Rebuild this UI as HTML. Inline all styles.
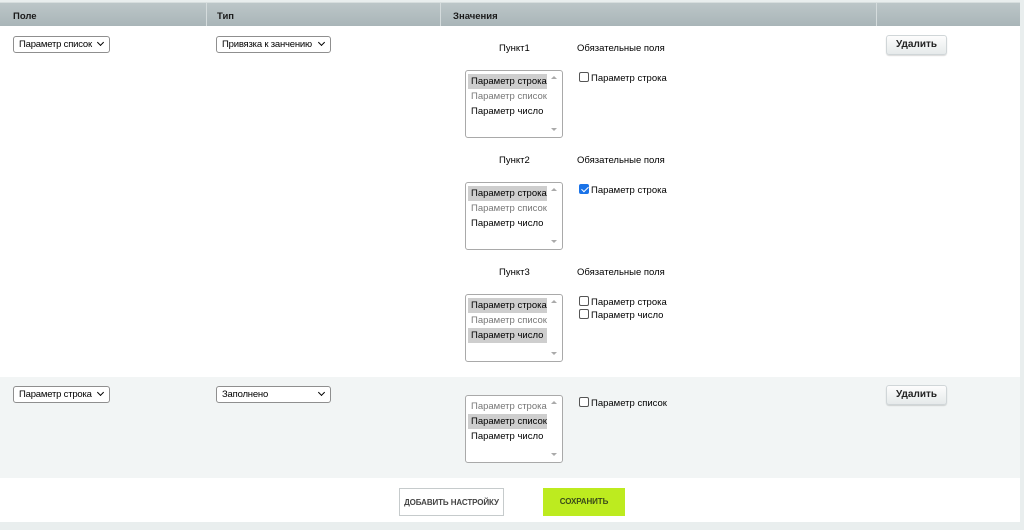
<!DOCTYPE html>
<html><head><meta charset="utf-8"><style>
*{box-sizing:border-box;margin:0;padding:0}
html,body{width:1024px;height:530px;overflow:hidden}
body{background:#e9eeee;font-family:"Liberation Sans",Arial,sans-serif;font-size:10px;color:#000;position:relative}
.a{position:absolute}
.hdr{left:0;top:2px;width:1020px;height:24px;background:linear-gradient(#bcc6c8,#a9b5b8);border-top:1px solid #d7dede}
.hdr span{position:absolute;top:8px;font-weight:bold;font-size:9.5px;color:#1a1a1a}
.vl{position:absolute;top:0;width:1px;height:24px;background:#d5dcdd}
.sel{position:absolute;height:17px;border:1px solid #8f8f8f;border-radius:3px;background:#fff;font-size:9.5px;padding:2px 0 0 5px;white-space:nowrap;overflow:hidden;letter-spacing:-0.2px}
.sel:after{content:"";position:absolute;right:6px;top:3px;width:4px;height:4px;border-right:1.6px solid #000;border-bottom:1.6px solid #000;transform:rotate(45deg)}
.lb{position:absolute;width:98px;height:68px;border:1px solid #a9a9a9;border-radius:3px;background:#fff;padding:3px 0 0 2px}
.lb div{height:15px;line-height:15px;padding-left:3px;width:79px;font-size:9.5px;white-space:nowrap;overflow:hidden}
.lb .s{background:#cecece}
.lb .g{color:#777}
.lb:before{content:"";position:absolute;right:5px;top:5px;border:3px solid transparent;border-bottom-color:#aaa;border-top:0}
.lb:after{content:"";position:absolute;right:5px;bottom:6px;border:3px solid transparent;border-top-color:#aaa;border-bottom:0}
.t{position:absolute;font-size:9.5px;white-space:nowrap}
.cb{position:absolute;width:10px;height:10px;border:1px solid #555;border-radius:2px;background:#fff}
.cb.on{background:#1a73e8;border-color:#1a73e8}
.cb.on:after{content:"";position:absolute;left:2.5px;top:0px;width:3px;height:6px;border-right:1.5px solid #fff;border-bottom:1.5px solid #fff;transform:rotate(45deg)}
.del{position:absolute;width:61px;height:20px;border:1px solid #d0d6d8;border-radius:3px;background:linear-gradient(#fdfdfd,#e6eaeb);font-weight:bold;font-size:10px;text-align:center;line-height:18px;color:#222;box-shadow:0 1px 1px rgba(0,0,0,.15)}
.btn{position:absolute;height:28px;font-weight:bold;font-size:8px;text-align:center;line-height:27px;white-space:nowrap;letter-spacing:-0.1px}
</style></head><body>
<div class="a hdr">
<span style="left:13px">Поле</span><span style="left:217px">Тип</span><span style="left:453px">Значения</span>
<div class="vl" style="left:206px"></div><div class="vl" style="left:440px"></div><div class="vl" style="left:876px"></div>
</div>
<div class="a" style="left:0;top:26px;width:1020px;height:351px;background:#fff"></div>
<div class="a" style="left:0;top:377px;width:1020px;height:101px;background:#f2f5f5"></div>
<div class="a" style="left:0;top:478px;width:1020px;height:44px;background:#fff"></div>

<div class="sel" style="left:13px;top:36px;width:97px">Параметр список</div>
<div class="sel" style="left:216px;top:36px;width:115px">Привязка к занчению</div>
<div class="del" style="left:886px;top:35px">Удалить</div>

<div class="t" style="left:499px;top:43px">Пункт1</div><div class="t" style="left:577px;top:43px">Обязательные поля</div>
<div class="lb" style="left:465px;top:70px"><div class="s">Параметр строка</div><div class="g">Параметр список</div><div>Параметр число</div></div>
<div class="cb" style="left:579px;top:72px"></div><div class="t" style="left:591px;top:73px">Параметр строка</div>

<div class="t" style="left:499px;top:155px">Пункт2</div><div class="t" style="left:577px;top:155px">Обязательные поля</div>
<div class="lb" style="left:465px;top:182px"><div class="s">Параметр строка</div><div class="g">Параметр список</div><div>Параметр число</div></div>
<div class="cb on" style="left:579px;top:184px"></div><div class="t" style="left:591px;top:185px">Параметр строка</div>

<div class="t" style="left:499px;top:267px">Пункт3</div><div class="t" style="left:577px;top:267px">Обязательные поля</div>
<div class="lb" style="left:465px;top:294px"><div class="s">Параметр строка</div><div class="g">Параметр список</div><div class="s">Параметр число</div></div>
<div class="cb" style="left:579px;top:296px"></div><div class="t" style="left:591px;top:297px">Параметр строка</div>
<div class="cb" style="left:579px;top:309px"></div><div class="t" style="left:591px;top:310px">Параметр число</div>

<div class="sel" style="left:13px;top:386px;width:97px">Параметр строка</div>
<div class="sel" style="left:216px;top:386px;width:115px">Заполнено</div>
<div class="del" style="left:886px;top:385px">Удалить</div>
<div class="lb" style="left:465px;top:395px"><div class="g">Параметр строка</div><div class="s">Параметр список</div><div>Параметр число</div></div>
<div class="cb" style="left:579px;top:397px"></div><div class="t" style="left:591px;top:398px">Параметр список</div>

<div class="btn" style="left:399px;top:488px;width:105px;border:1px solid #c6cbcc;background:#fff;color:#444">ДОБАВИТЬ НАСТРОЙКУ</div>
<div class="btn" style="left:543px;top:488px;width:82px;background:#bdeb1f;color:#3a4a1a;line-height:28px">СОХРАНИТЬ</div>
</body></html>
